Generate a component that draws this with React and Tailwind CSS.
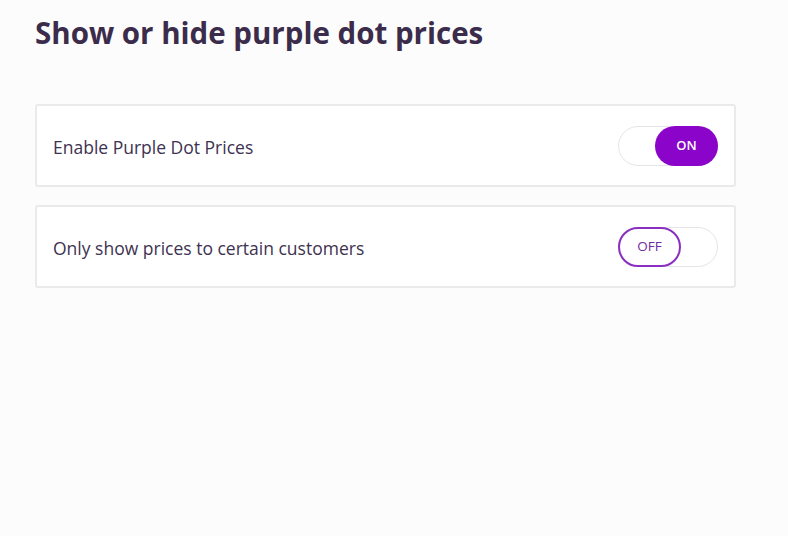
import React, { useState } from 'react';

const Toggle = ({ on, onClick }) => (
    <button
        onClick={onClick}
        className="relative flex h-[40px] w-[100px] items-center rounded-full border border-[#e6e4e8] bg-white"
    >
        {on ? (
            <span className="absolute right-[-1px] top-[-1px] flex h-[40px] w-[63px] items-center justify-center rounded-full bg-[#8a05c9] text-[13px] font-semibold text-white">
                ON
            </span>
        ) : (
            <span className="absolute left-[-1px] top-[-1px] flex h-[40px] w-[63px] items-center justify-center rounded-full border-2 border-[#8a2fc0] bg-white text-[13.5px] font-medium text-[#6f2a9e]">
                OFF
            </span>
        )}
    </button>
);

const SettingRow = ({ label, on, onToggle }) => (
    <div className="flex h-[83px] items-center justify-between rounded-[3px] border-2 border-[#ebe9ec] bg-white pl-[16px] pr-[16px]">
        <span className="pt-[4px] text-[17.5px] text-[#3d3250]">{label}</span>
        <Toggle on={on} onClick={onToggle} />
    </div>
);

export default function App() {
    const [enabled, setEnabled] = useState(true);
    const [restricted, setRestricted] = useState(false);

    return (
        <div className="min-h-[536px] w-[788px] bg-[#fdfcfc] px-[35px] pt-[13px]" style={{ fontFamily: '"Open Sans", Lato, sans-serif' }}>
            <h1 className="text-[29.5px] font-bold leading-[40px] text-[#3b2c4c]">Show or hide purple dot prices</h1>

            <div className="mt-[51px] flex w-[701px] flex-col gap-[18px]">
                <SettingRow label="Enable Purple Dot Prices" on={enabled} onToggle={() => setEnabled(!enabled)} />
                <SettingRow label="Only show prices to certain customers" on={restricted} onToggle={() => setRestricted(!restricted)} />
            </div>
        </div>
    );
}
